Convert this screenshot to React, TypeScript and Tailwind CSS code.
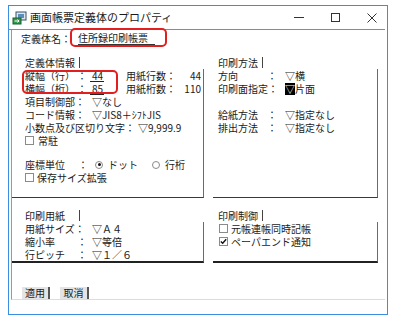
const font = { fontFamily: '"Noto Sans CJK JP", "Noto Sans", sans-serif' };

function Check({ checked = false }: { checked?: boolean }) {
  return (
    <span className="inline-flex w-[9px] h-[9px] border border-[#8a8a8a] bg-white items-center justify-center shrink-0">
      {checked && (
        <svg width="7" height="7" viewBox="0 0 7 7">
          <path d="M0.8 3.4 L2.7 5.3 L6.2 1.2" stroke="#111" strokeWidth="1.4" fill="none" />
        </svg>
      )}
    </span>
  );
}

function Radio({ on = false }: { on?: boolean }) {
  return (
    <span className="inline-flex w-[8px] h-[8px] rounded-full border border-[#8a8a8a] bg-white items-center justify-center shrink-0">
      {on && <span className="w-[3px] h-[3px] rounded-full bg-[#111]" />}
    </span>
  );
}

function Header({ label, w }: { label: string; w: string }) {
  return (
    <div className="h-[13px] flex items-center">
      <span className={w}>{label}</span>
      <span className="w-px h-[11px] bg-[#444]" />
    </div>
  );
}

function Row({ children }: { children?: React.ReactNode }) {
  return <div className="h-[13px] flex items-center whitespace-nowrap">{children}</div>;
}

export default function App() {
  return (
    <div className="w-[393px] h-[325px] bg-white pt-[5px] pl-[8px] text-[10px] leading-[13px] text-[#1a1a1a]" style={font}>
      <div className="relative w-[380px] h-[310px] border border-[#3a8fe2] flex flex-col">
        {/* title bar */}
        <div className="h-[23px] flex items-center pl-[3px]">
          <svg width="15" height="14" viewBox="0 0 15 14">
            <rect x="4" y="1" width="10" height="8" fill="#dfe7ee" stroke="#36506a" />
            <rect x="6" y="3" width="6" height="4" fill="#5b8fb9" />
            <rect x="1" y="7" width="8" height="6" fill="#2f9a4a" stroke="#1d5f2e" />
            <path d="M2.5 10 L7 10 M5.5 8.5 L7 10 L5.5 11.5" stroke="#fff" strokeWidth="1" fill="none" />
          </svg>
          <span className="ml-[3px] text-[11px]">画面帳票定義体のプロパティ</span>
          <div className="ml-auto flex items-center">
            <span className="w-[10px] h-px bg-[#333]" />
            <span className="ml-[27px] w-[9px] h-[9px] border border-[#333]" />
            <svg className="ml-[27px] mr-[10px]" width="10" height="10" viewBox="0 0 10 10">
              <path d="M0.5 0.5 L9.5 9.5 M9.5 0.5 L0.5 9.5" stroke="#333" strokeWidth="1" />
            </svg>
          </div>
        </div>
        <div className="h-px bg-[#8a8a8a] mr-[2px]" />

        {/* client */}
        <div className="ml-[2px] mr-[2px] border-l border-b border-l-[#9a9a9a] border-b-[#dcdcdc] flex flex-col">
          <div className="h-[26px] pt-[2px] pl-[9px] flex items-start">
            <Row>
              <span className="w-[57px]">定義体名：</span>
              <span className="w-[77px] border-b border-[#333] leading-[12px]">住所録印刷帳票</span>
            </Row>
          </div>

          <div className="grid grid-cols-[192px_1fr]">
            {/* 定義体情報 */}
            <div>
              <div className="pl-[13px]">
                <Header label="定義体情報" w="w-[54px]" />
              </div>
              <div className="h-[129px] border-r border-b border-r-[#6a6a6a] border-b-[#3a3a3a] pl-[13px]">
                <Row>
                  <span className="w-[52px]">縦幅（行）</span>
                  <span className="w-[13px]">：</span>
                  <span className="w-[14px] border-b border-[#222] leading-[11px] text-right pr-px">44</span>
                  <span className="ml-[22px]">用紙行数：</span>
                  <span className="flex-1 text-right pr-[2px]">44</span>
                </Row>
                <Row>
                  <span className="w-[52px]">横幅（桁）</span>
                  <span className="w-[13px]">：</span>
                  <span className="w-[14px] border-b border-[#222] leading-[11px] text-right pr-px">85</span>
                  <span className="ml-[22px]">用紙桁数：</span>
                  <span className="flex-1 text-right pr-[2px]">110</span>
                </Row>
                <Row>
                  <span className="w-[67px]">項目制御部：</span>
                  <span>▽なし</span>
                </Row>
                <Row>
                  <span className="w-[67px]">コード情報：</span>
                  <span>▽JIS8＋ｼﾌﾄJIS</span>
                </Row>
                <Row>
                  <span className="w-[113px]">小数点及び区切り文字：</span>
                  <span>▽9,999.9</span>
                </Row>
                <Row>
                  <Check />
                  <span className="ml-[4px]">常駐</span>
                </Row>
                <div className="mt-[11px]">
                  <Row>
                    <span className="w-[53px]">座標単位</span>
                    <span className="w-[17px]">：</span>
                    <Radio on />
                    <span className="ml-[5px] w-[44px]">ドット</span>
                    <Radio />
                    <span className="ml-[5px]">行桁</span>
                  </Row>
                  <Row>
                    <Check />
                    <span className="ml-[3px]">保存サイズ拡張</span>
                  </Row>
                </div>
              </div>
            </div>

            {/* 印刷方法 */}
            <div>
              <div className="pl-[14px]">
                <Header label="印刷方法" w="w-[44px]" />
              </div>
              <div className="ml-[9px] w-[165px] h-[129px] border-r border-b border-r-[#6a6a6a] border-b-[#3a3a3a] pl-[5px]">
                <Row>
                  <span className="w-[49px]">方向</span>
                  <span className="w-[18px]">：</span>
                  <span>▽横</span>
                </Row>
                <Row>
                  <span className="w-[50px]">印刷面指定</span>
                  <span className="w-[17px]">：</span>
                  <span className="bg-black text-white leading-[12px]">▽</span>
                  <span>片面</span>
                </Row>
                <Row />
                <Row>
                  <span className="w-[49px]">給紙方法</span>
                  <span className="w-[18px]">：</span>
                  <span>▽指定なし</span>
                </Row>
                <Row>
                  <span className="w-[49px]">排出方法</span>
                  <span className="w-[18px]">：</span>
                  <span>▽指定なし</span>
                </Row>
              </div>
            </div>

            {/* 印刷用紙 */}
            <div className="pt-[11px]">
              <div className="pl-[13px]">
                <Header label="印刷用紙" w="w-[54px]" />
              </div>
              <div className="h-[41px] border-r border-b-2 border-r-[#6a6a6a] border-b-[#222] pl-[13px]">
                <Row>
                  <span className="w-[67px]">用紙サイズ：</span>
                  <span>▽Ａ４</span>
                </Row>
                <Row>
                  <span className="w-[52px]">縮小率</span>
                  <span className="w-[15px]">：</span>
                  <span>▽等倍</span>
                </Row>
                <Row>
                  <span className="w-[52px]">行ピッチ</span>
                  <span className="w-[15px]">：</span>
                  <span>▽１／６</span>
                </Row>
              </div>
            </div>

            {/* 印刷制御 */}
            <div className="pt-[11px]">
              <div className="pl-[14px]">
                <Header label="印刷制御" w="w-[44px]" />
              </div>
              <div className="ml-[9px] w-[165px] h-[41px] border-r border-b-2 border-r-[#6a6a6a] border-b-[#222] pl-[6px]">
                <Row>
                  <Check />
                  <span className="ml-[3px]">元帳連帳同時記帳</span>
                </Row>
                <Row>
                  <Check checked />
                  <span className="ml-[3px]">ペーパエンド通知</span>
                </Row>
              </div>
            </div>
          </div>

          <div className="mt-[24px] h-[12px] flex items-end gap-[10px] pl-[10px]">
            <button className="w-[28px] h-[12px] bg-[#e4e4e4] border-r-2 border-[#555] text-[10px] leading-[12px] text-center">適用</button>
            <button className="w-[29px] h-[12px] bg-[#e4e4e4] border-r-2 border-[#555] text-[10px] leading-[12px] text-center">取消</button>
          </div>
        </div>

        {/* annotation boxes */}
        <div className="absolute left-[61px] top-[22px] w-[97px] h-[19px] border-2 border-[#e21f1f] rounded-[5px]" />
        <div className="absolute left-[13px] top-[64px] w-[96px] h-[24px] border-2 border-[#e21f1f] rounded-[5px]" />
      </div>
    </div>
  );
}
